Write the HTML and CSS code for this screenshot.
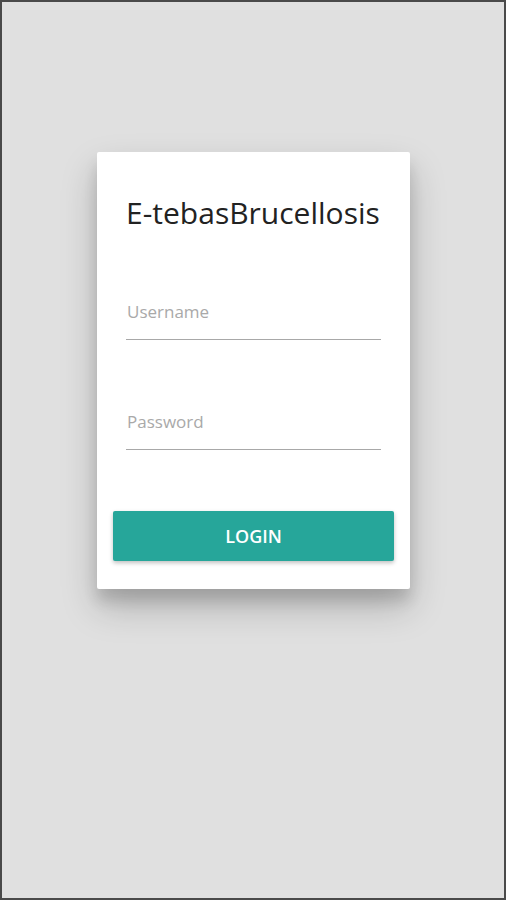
FILE: index.html
```html
<!DOCTYPE html>
<html lang="en">
<head>
<meta charset="utf-8">
<title>E-tebasBrucellosis</title>
<link rel="stylesheet" href="styles.css">
</head>
<body>
<div class="screen">
  <form class="card">
    <h1 class="title">E-tebasBrucellosis</h1>
    <div class="field"><input class="input" type="text" placeholder="Username"></div>
    <div class="field"><input class="input" type="password" placeholder="Password"></div>
    <button class="btn" type="button">LOGIN</button>
  </form>
</div>
</body>
</html>
```
FILE: styles.css
```css
* { box-sizing: border-box; }
html, body { margin: 0; padding: 0; }
body {
  font-family: "Open Sans", "Noto Sans", sans-serif;
  background: #4a4a4a;
}
.screen {
  width: 506px;
  height: 900px;
  border: 2px solid #4a4a4a;
  background: #e0e0e0;
  padding-top: 150px;
  display: flex;
  flex-direction: column;
  align-items: center;
}
.card {
  width: 313px;
  height: 437px;
  margin-left: 1px;
  background: #fff;
  border-radius: 2px;
  box-shadow: 0 18px 36px rgba(0,0,0,0.22), 0 12px 14px rgba(0,0,0,0.12);
  padding: 0 16px;
  display: flex;
  flex-direction: column;
}
.title {
  margin: 37px 0 0 13px;
  font-weight: 400;
  font-size: 30px;
  line-height: 48px;
  color: #222;
}
.field {
  margin: 50px 13px 0 13px;
  border-bottom: 1px solid #a8a8a8;
}
.field + .field { margin-top: 57px; }
.input {
  display: block;
  width: 100%;
  border: 0;
  outline: 0;
  padding: 0 1px 4px;
  height: 52px;
  font-family: inherit;
  font-size: 17px;
  color: #333;
  background: transparent;
}
.input::placeholder { color: #a9a9a9; }
.btn {
  margin-top: 61px;
  height: 50px;
  width: 100%;
  border: 0;
  border-radius: 2px;
  background: #26a69a;
  color: #fff;
  font-family: inherit;
  font-size: 18px;
  font-weight: 600;
  box-shadow: 0 2px 4px rgba(0,0,0,0.25);
}
```
